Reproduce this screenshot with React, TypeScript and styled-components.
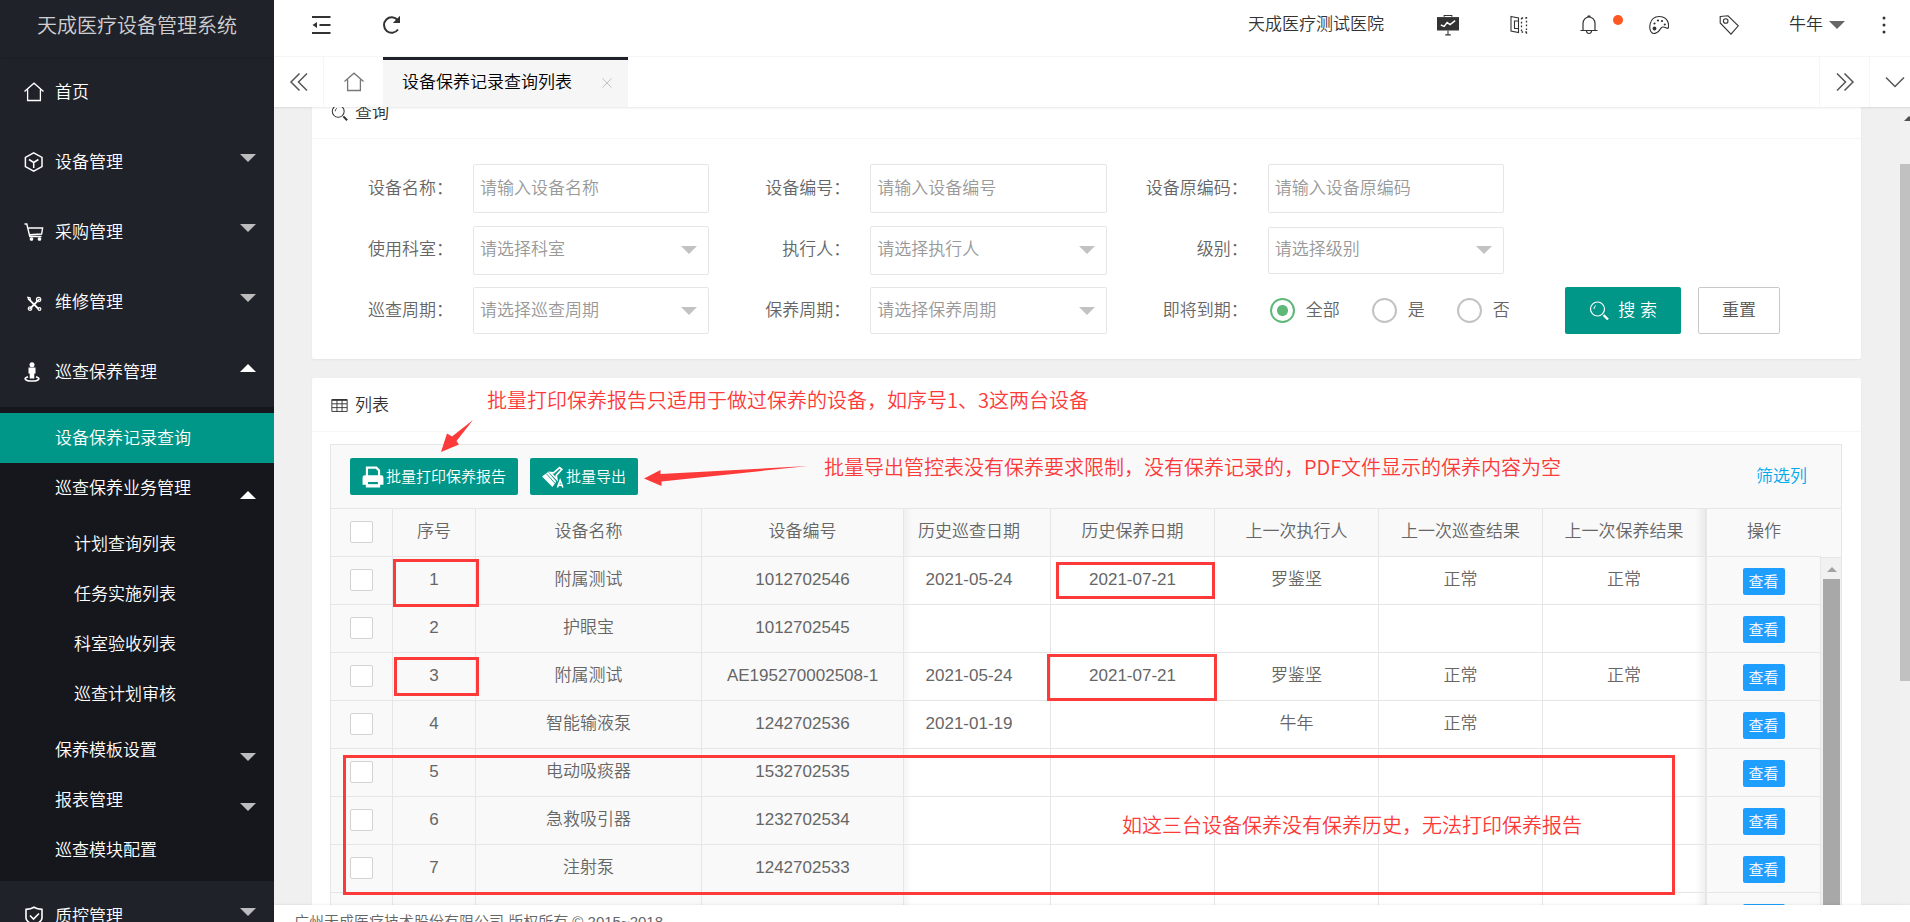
import React from 'react';
import styled, { createGlobalStyle, css } from 'styled-components';

const TEAL = '#009688';
const LINE = '#e6e6e6';
const MARK = '#fc3a39';

const GlobalStyle = createGlobalStyle`
  * { box-sizing: border-box; }
  body {
    margin: 0;
    background: #f0f0f0;
    color: #666;
    font: 350 17px/24px "Liberation Sans", "Noto Sans CJK SC", sans-serif;
  }
  ul { margin: 0; padding: 0; list-style: none; }
  h1, h2, p { margin: 0; font-weight: inherit; }
  a { color: inherit; text-decoration: none; }
  button, input, select { font: inherit; color: inherit; }
  button { padding: 0; border: 0; background: none; cursor: pointer; }
`;

/* ---------- icons ---------- */

const Svg = styled.svg<{ $size?: number }>`
  display: block;
  flex: none;
  width: ${p => p.$size ?? 20}px;
  height: ${p => p.$size ?? 20}px;
  fill: none;
  stroke: currentColor;
  stroke-width: 1.3;
`;

type IconName =
  | 'home' | 'cube' | 'cart' | 'tools' | 'person' | 'shield' | 'collapse' | 'refresh'
  | 'board' | 'note' | 'bell' | 'palette' | 'tag' | 'more' | 'left' | 'right' | 'down'
  | 'close' | 'search' | 'grid' | 'printer' | 'brush';

const shapes: Record<IconName, React.ReactNode> = {
  home: <path d="M.5 9.5 10 1.2l9.500 8.300M3.600 7.500v11h12.800v-11" />,
  cube: <path strokeWidth="1.500" d="M9.700.9 18 5.400v9.200l-8.300 4.500-8.300-4.500V5.400zM5 7.500l4.700 3 4.700-3M9.700 10.500v5.500" />,
  cart: <><path strokeWidth="1.400" d="M.5 2h2.300l3 12.500h11.700M4.600 6h14l-1 6-12 .8" /><circle cx="7.500" cy="17" r="1.200" fill="currentColor" /><circle cx="15.500" cy="17" r="1.200" fill="currentColor" /></>,
  tools: <g transform="translate(2 3.500) scale(.9)"><path strokeWidth="2" d="M2.500 3.500 14 15M15 4 4 15" /><circle cx="14" cy="4.500" r="2.400" /><circle cx="4.500" cy="14.500" r="2" /><circle cx="15" cy="15" r="1.500" /><path d="M2 2l2.500.5L5 5l-2-.5z" /></g>,
  person: <><circle cx="8" cy="2.800" r="2.500" fill="currentColor" stroke="none" /><path fill="currentColor" stroke="none" d="M4.500 5.500h7v6H10.300v5H5.700v-5H4.500z" /><path strokeWidth="1.700" d="M4 14.700c-5 1.600-3 4.300 4 4.300s9-2.700 4-4.300" /></>,
  shield: <path strokeWidth="1.600" d="M10 1.200c2.500 1.500 5 2 8 2.200v8.500c0 3-4 5.500-8 7-4-1.500-8-4-8-7V3.400c3-.2 5.500-.7 8-2.200zM6 9.500l3.500 3.500 5.500-5.500" />,
  collapse: <><path strokeWidth="2" d="M1 2h18.500M8.500 10h11M1 18h18.500" /><path fill="currentColor" stroke="none" d="M1.500 10 6 7v6z" /></>,
  refresh: <><path strokeWidth="2" d="M16.700 5.200A7.700 7.700 0 1 0 17 14.500" /><path fill="currentColor" stroke="none" d="M19 .8V8h-7.200z" /></>,
  board: <><path fill="currentColor" stroke="none" d="M0 2.800h20V15H0z" /><path strokeWidth="1" d="M6.500 2.500V1.300h7v1.200M10 15v4M7.500 19h5" /><path stroke="#fff" d="m3.500 10 3 1.300 2.700-3.500 2.700 1.800L16.500 6" /></>,
  note: <><path strokeWidth="1.100" d="M2 1.500 9.500 3v14.500L2 16zM5.500 6h4v7.500h-4z" /><path strokeWidth="1.300" strokeDasharray="1.600 2.200" d="M12.500 3v14M17.500 2v17M12.500 3h6M12.500 17h6" /></>,
  bell: <path strokeWidth="1.200" d="M1.500 15.500h17M4 15.500v-7a6 6.500 0 0 1 12 0v7M8.800 2a1.200 1.200 0 0 1 2.400 0M7.500 16c.3 3.300 4.700 3.300 5 0" />,
  palette: <><path strokeWidth="1.100" d="M4 18.500C-1.500 15 .2 1.500 10 1.500c8 0 10.500 6.500 9.300 11.500-1.800.8-3-1.500-5.800-1-3 .7-2.300 6.500-9.500 6.500z" /><g fill="currentColor" stroke="none"><circle cx="5.500" cy="13.500" r="1.900" /><circle cx="5.500" cy="8.500" r="1.100" /><circle cx="9" cy="5.500" r="1.100" /><circle cx="13" cy="6" r="1.100" /><circle cx="15.800" cy="9.500" r="1.100" /></g></>,
  tag: <><path strokeWidth="1.100" d="M1.200 1.500 9 .8l10.300 10L12 19.200 1.200 8z" /><circle cx="6.700" cy="6" r="2.300" strokeWidth="1.100" /></>,
  more: <g fill="currentColor" stroke="none"><circle cx="10" cy="3" r="1.500" /><circle cx="10" cy="10" r="1.500" /><circle cx="10" cy="17" r="1.500" /></g>,
  left: <path strokeWidth="1.500" d="M10.500 1.500 2 10l8.500 8.500M18 1.500 9.500 10l8.500 8.500" />,
  right: <path strokeWidth="1.500" d="M2 1.500l8.500 8.500L2 18.500M9.500 1.500 18 10l-8.500 8.500" />,
  down: <path strokeWidth="1.500" d="m1 5.500 9 9 9-9" />,
  close: <path strokeWidth="2" d="m1 1 18 18M19 1 1 19" />,
  search: <><circle cx="8.500" cy="8" r="7" strokeWidth="1.200" /><path strokeWidth="2.400" d="m14.500 14 4.500 4.500" /><path strokeWidth="1" d="M5 8a3.500 3.500 0 0 1 2-3.500" /></>,
  grid: <><path strokeWidth="1.100" d="M1 3h18v14H1zM1 8h18M1 12.500h18M7 3v14M13 3v14" /><path strokeWidth="2" d="M1 3.500h18" /></>,
  printer: <><path strokeWidth="2" d="M4.500 9V1.500h8.500L15.500 4v5" /><path fill="currentColor" stroke="none" d="M2.500 8.500h15a2 2 0 0 1 2 2V17h-3v2.500h-13V17h-3v-6.500a2 2 0 0 1 2-2z" /><path stroke={TEAL} strokeWidth="2" d="M5.500 15.500h9" /></>,
  brush: <><path fill="currentColor" stroke="none" d="m5.500 5.500 7.500 8.500-3.500 5L0 9.500z" /><path stroke={TEAL} strokeWidth=".8" d="m4 7 8 9" /><path strokeWidth="1.500" d="m7.500 6 3 .3L16 1.500l2 1.500-5 5.500.5 3.500z" /><path strokeWidth="1.500" d="m14 19.500 2.500-6.500 2.500 6.500M15 17.500h3" /></>,
};

const Icon = ({ name, size }: { name: IconName; size?: number }) => (
  <Svg viewBox="0 0 20 20" $size={size} aria-hidden="true">{shapes[name]}</Svg>
);

const Caret = styled.i<{ $up?: boolean; $color?: string }>`
  flex: none;
  width: 0;
  height: 0;
  border: 0 solid transparent;
  border-left-width: 8px;
  border-right-width: 8px;
  ${p => p.$up
    ? css`border-bottom: 8px solid ${p.$color ?? '#fff'};`
    : css`border-top: 8px solid ${p.$color ?? '#bcbcbe'};`}
`;

/* ---------- page frame ---------- */

const Page = styled.div`
  display: flex;
  height: 100vh;
  overflow: hidden;
`;

const Main = styled.div`
  flex: 1;
  min-width: 0;
  display: flex;
  flex-direction: column;
`;

/* ---------- sidebar ---------- */

const Sidebar = styled.nav`
  flex: none;
  width: 274px;
  overflow: hidden;
  background: #20222a;
  color: #fff;
`;

const Brand = styled.h1`
  height: 57px;
  font-size: 20px;
  line-height: 52px;
  text-align: center;
  color: rgba(255, 255, 255, .8);
  box-shadow: 0 1px 2px rgba(0, 0, 0, .15);
`;

const MenuLink = styled.a`
  display: flex;
  align-items: center;
  height: 70px;
  padding: 0 18px 0 24px;
  gap: 11px;

  ${Caret} { margin: 0 0 8px auto; }
`;

const MenuText = styled.span`
  padding-top: 2px;
`;

const SubMenu = styled.ul`
  padding: 6px 0;
  background: #16171c;
`;

const SubLink = styled.a<{ $active?: boolean }>`
  display: flex;
  align-items: center;
  justify-content: space-between;
  height: 50px;
  padding: 2px 18px 0 55px;
  background: ${p => (p.$active ? TEAL : 'transparent')};

  ${Caret} { margin-top: 11px; }
`;

const LeafList = styled.ul`
  padding: 6px 0;
`;

const LeafLink = styled.a`
  display: block;
  height: 50px;
  padding-left: 74px;
  line-height: 52px;
`;

/* ---------- header ---------- */

const Header = styled.header`
  flex: none;
  display: flex;
  justify-content: space-between;
  height: 57px;
  padding-left: 12px;
  background: #fff;
  border-bottom: 1px solid #f6f6f6;
  color: #333;
`;

const HeaderGroup = styled.div`
  display: flex;
  padding-bottom: 6px;
`;

const HeaderButton = styled.button<{ $narrow?: boolean }>`
  position: relative;
  display: flex;
  align-items: center;
  gap: 6px;
  padding: 0 ${p => (p.$narrow ? 16 : 25)}px;
`;

const HospitalButton = styled(HeaderButton)`
  padding-right: 28px;
`;

const UserButton = styled(HeaderButton)`
  padding-right: 13px;
`;

const Dot = styled.span`
  position: absolute;
  top: 15px;
  right: 1px;
  width: 10px;
  height: 10px;
  border-radius: 50%;
  background: #ff5722;
`;

const TabBar = styled.div`
  position: relative;
  z-index: 1;
  flex: none;
  display: flex;
  height: 50px;
  margin-right: -9px;
  background: #fff;
  box-shadow: 0 1px 2px rgba(0, 0, 0, .1);
  color: #555;
`;

const TabTool = styled.button<{ $side?: 'left' | 'right' }>`
  flex: none;
  display: flex;
  align-items: center;
  justify-content: center;
  width: 50px;
  border: 0 solid #f6f6f6;
  ${p => (p.$side === 'left' ? 'border-right-width: 1px;' : '')}
  ${p => (p.$side === 'right' ? 'border-left-width: 1px;' : '')}
`;

const HomeTab = styled(TabTool)`
  width: 59px;
  color: #777;
`;

const ActiveTab = styled.div`
  display: flex;
  align-items: center;
  width: 245px;
  padding: 0 16px 2px 19px;
  margin-right: auto;
  border-top: 3px solid #20222a;
  background: #f6f6f6;
  color: #000;
  white-space: nowrap;

  button { color: #c2c2c2; margin-left: auto; }
`;

/* ---------- body ---------- */

const Viewport = styled.div`
  flex: 1;
  min-height: 0;
  display: flex;
  overflow: hidden;
`;

const Content = styled.main`
  flex: 1;
  min-width: 0;
  display: flex;
  flex-direction: column;
  gap: 19px;
  margin-top: -22px;
  padding: 0 38px;
`;

const Card = styled.section`
  position: relative;
  flex: none;
  background: #fff;
  border-radius: 2px;
  box-shadow: 0 1px 2px rgba(0, 0, 0, .05);
`;

const CardTitle = styled.h2`
  display: flex;
  align-items: center;
  gap: 7px;
  height: 54px;
  padding: 2px 19px 0;
  border-bottom: 1px solid #f6f6f6;
  font-size: 17px;
  color: #333;

  svg { width: 17px; }
`;

const SearchForm = styled.form`
  display: grid;
  grid-template-columns: 265fr 265fr 265fr 238fr;
  grid-template-rows: 49px 50px 47px;
  row-gap: 12px;
  padding: 25px 0;
`;

const Field = styled.div<{ $row: number; $col: number }>`
  grid-row: ${p => p.$row};
  grid-column: ${p => p.$col};
  display: flex;
  align-items: center;
  min-width: 0;
`;

const FieldLabel = styled.label`
  flex: none;
  width: 161px;
  padding-right: 20px;
  text-align: right;
`;

const Control = styled.div`
  position: relative;
  flex: 1;
  min-width: 0;

  ${Caret} {
    position: absolute;
    top: 50%;
    right: 12px;
    margin-top: -4px;
    pointer-events: none;
  }
`;

const boxed = css<{ $short?: boolean }>`
  display: block;
  width: 100%;
  height: ${p => (p.$short ? 47 : 49)}px;
  padding: 0 6px;
  border: 1px solid ${LINE};
  border-radius: 2px;
  background: #fff;
  color: #999;
  appearance: none;
  outline: none;
`;

const TextInput = styled.input`
  ${boxed}
  &::placeholder { color: #999; opacity: 1; }
`;

const SelectBox = styled.select<{ $short?: boolean }>`
  ${boxed}
`;

const RadioGroup = styled.div`
  display: flex;
  gap: 32px;
  padding-left: 2px;
  white-space: nowrap;
`;

const RadioLabel = styled.label`
  display: flex;
  align-items: center;
  gap: 11px;
`;

const Radio = styled.input`
  appearance: none;
  flex: none;
  width: 25px;
  height: 25px;
  margin: 0;
  border: 2px solid #c2c2c2;
  border-radius: 50%;

  &:checked {
    border-color: #5fb878;
    background: radial-gradient(circle, #5fb878 5px, transparent 6px);
  }
`;

const FormActions = styled.div`
  grid-row: 3;
  grid-column: 4;
  display: flex;
  gap: 17px;
  padding-left: 61px;
`;

const SearchButton = styled.button`
  display: flex;
  align-items: center;
  justify-content: center;
  gap: 9px;
  width: 116px;
  height: 47px;
  border-radius: 2px;
  background: ${TEAL};
  color: #fff;
`;

const ResetButton = styled.button`
  width: 82px;
  height: 47px;
  border: 1px solid #c9c9c9;
  border-radius: 2px;
  background: #fff;
  color: #555;
`;

/* ---------- table ---------- */

const TableFrame = styled.div`
  margin: 12px 19px 0 18px;
  border: 1px solid ${LINE};
  background: #f9f9f9;
`;

const Toolbar = styled.div`
  display: flex;
  align-items: center;
  gap: 12px;
  height: 64px;
  padding: 0 34px 0 19px;
  border-bottom: 1px solid ${LINE};
`;

const BatchButton = styled.button`
  display: flex;
  align-items: center;
  gap: 2px;
  height: 37px;
  padding: 0 12px;
  border-radius: 2px;
  background: ${TEAL};
  color: #fff;
  font-size: 15px;
`;

const FilterLink = styled.a`
  margin-left: auto;
  color: #01aaed;
`;

const TableBody = styled.div`
  display: flex;
  background: #f9f9f9;
`;

const Grid = styled.table`
  flex: 1;
  min-width: 0;
  border-collapse: separate;
  border-spacing: 0;
  table-layout: fixed;
  text-align: center;
`;

const Cell = styled.td<{ $kind?: 'scroll' | 'first' | 'last' | 'op'; $head?: boolean }>`
  height: 48px;
  padding: 0 0 2px;
  border: 0 solid ${LINE};
  border-right-width: 1px;
  border-bottom-width: 1px;
  background: #f9f9f9;
  font-weight: inherit;
  white-space: nowrap;

  ${p => p.$kind && p.$kind !== 'op' && !p.$head && css`background: #fff;`}
  ${p => p.$kind === 'first' && css`
    padding-right: 16px;
    background-image: linear-gradient(to right, rgba(0, 0, 0, .04), transparent 8px);
  `}
  ${p => p.$kind === 'last' && css`
    border-right-width: 2px;
    background-image: linear-gradient(to left, rgba(0, 0, 0, .06), transparent 10px);
  `}
  ${p => p.$kind === 'op' && css`
    padding: 0;
    ${p.$head ? 'border-right-width: 0; padding-bottom: 2px;' : ''}
  `}
`;

const Check = styled.input`
  appearance: none;
  display: block;
  width: 23px;
  height: 22px;
  margin: 0 0 0 19px;
  border: 1px solid #d2d2d2;
  border-radius: 2px;
  background: #fff;
`;

const ViewButton = styled.button`
  display: block;
  width: 42px;
  height: 27px;
  margin: 2px auto 0;
  border-radius: 2px;
  background: #1e9fff;
  color: #fff;
  font-size: 15px;
  line-height: 27px;
`;

const InnerScroll = styled.div`
  flex: none;
  display: flex;
  flex-direction: column;
  width: 20px;

  &::before {
    content: '';
    height: 48px;
    border-bottom: 1px solid ${LINE};
  }
`;

const InnerTrack = styled.div`
  flex: 1;
  display: flex;
  flex-direction: column;
  align-items: center;
  padding: 9px 0 0 1px;
  background: #f1f1f1;

  ${Caret} {
    border-left-width: 5px;
    border-right-width: 5px;
    border-bottom-width: 5px;
  }

  &::after {
    content: '';
    flex: 1;
    width: 17px;
    margin-top: 7px;
    background: #a8a8a8;
  }
`;

const PageScroll = styled.div`
  flex: none;
  width: 11px;
  padding-left: 1px;
  overflow: hidden;
  background: #f1f1f1;

  ${Caret} {
    display: block;
    margin: 9px 0 43px 4px;
    border-left-width: 5px;
    border-right-width: 5px;
    border-bottom-width: 5px;
  }
`;

const PageThumb = styled.div`
  height: 517px;
  background: #c1c1c1;
`;

const Footer = styled.footer`
  position: relative;
  flex: none;
  height: 17px;
  padding-left: 20px;
  overflow: hidden;
  background: #fff;
  box-shadow: 0 -1px 2px rgba(0, 0, 0, .06);
  font-size: 15px;
  line-height: 34px;
`;

/* ---------- hand-drawn notes over the list card ---------- */

const MarkLayer = styled.div`
  position: absolute;
  inset: 0;
  pointer-events: none;
  color: ${MARK};
  font: 350 20px/28px "Noto Sans CJK SC", sans-serif;
  white-space: nowrap;
`;

const MarkBox = styled.div<{ $x: number; $y: number; $w: number; $h: number }>`
  position: absolute;
  left: ${p => p.$x}px;
  top: ${p => p.$y}px;
  width: ${p => p.$w}px;
  height: ${p => p.$h}px;
  border: 3px solid ${MARK};
`;

const MarkText = styled.p<{ $x: number; $y: number }>`
  position: absolute;
  left: ${p => p.$x}px;
  top: ${p => p.$y}px;
`;

const MarkArrows = styled.svg`
  position: absolute;
  left: 0;
  top: 0;
  width: 520px;
  height: 120px;
  fill: ${MARK};
`;

/* ---------- data ---------- */

const topMenu: { icon: IconName; text: string; leaf?: boolean }[] = [
  { icon: 'home', text: '首页', leaf: true },
  { icon: 'cube', text: '设备管理' },
  { icon: 'cart', text: '采购管理' },
  { icon: 'tools', text: '维修管理' },
];

const leaves = ['计划查询列表', '任务实施列表', '科室验收列表', '巡查计划审核'];

const fields: { id: string; label: string; hint: string; row: number; col: number; select?: boolean; short?: boolean }[] = [
  { id: 'name', label: '设备名称：', hint: '请输入设备名称', row: 1, col: 1 },
  { id: 'code', label: '设备编号：', hint: '请输入设备编号', row: 1, col: 2 },
  { id: 'origin', label: '设备原编码：', hint: '请输入设备原编码', row: 1, col: 3 },
  { id: 'dept', label: '使用科室：', hint: '请选择科室', row: 2, col: 1, select: true },
  { id: 'executor', label: '执行人：', hint: '请选择执行人', row: 2, col: 2, select: true },
  { id: 'level', label: '级别：', hint: '请选择级别', row: 2, col: 3, select: true, short: true },
  { id: 'patrol', label: '巡查周期：', hint: '请选择巡查周期', row: 3, col: 1, select: true, short: true },
  { id: 'upkeep', label: '保养周期：', hint: '请选择保养周期', row: 3, col: 2, select: true, short: true },
];

const widths = ['62px', '83px', undefined, '202px', '147px', '164px', '164px', '164px', '164px', '114px'];

const heads = ['序号', '设备名称', '设备编号', '历史巡查日期', '历史保养日期', '上一次执行人', '上一次巡查结果', '上一次保养结果'];

const rows = [
  ['1', '附属测试', '1012702546', '2021-05-24', '2021-07-21', '罗鉴坚', '正常', '正常'],
  ['2', '护眼宝', '1012702545', '', '', '', '', ''],
  ['3', '附属测试', 'AE195270002508-1', '2021-05-24', '2021-07-21', '罗鉴坚', '正常', '正常'],
  ['4', '智能输液泵', '1242702536', '2021-01-19', '', '牛年', '正常', ''],
  ['5', '电动吸痰器', '1532702535', '', '', '', '', ''],
  ['6', '急救吸引器', '1232702534', '', '', '', '', ''],
  ['7', '注射泵', '1242702533', '', '', '', '', ''],
  ['', '', '', '', '', '', '', ''],
];

const kindOf = (i: number) => (i < 3 ? undefined : i === 3 ? 'first' : i === 7 ? 'last' : 'scroll') as
  'first' | 'last' | 'scroll' | undefined;

/* ---------- parts ---------- */

const SideNav = () => (
  <Sidebar>
    <Brand>天成医疗设备管理系统</Brand>
    <ul>
      {topMenu.map(m => (
        <li key={m.text}>
          <MenuLink href="#"><Icon name={m.icon} /><MenuText>{m.text}</MenuText>{!m.leaf && <Caret />}</MenuLink>
        </li>
      ))}
      <li>
        <MenuLink href="#"><Icon name="person" /><MenuText>巡查保养管理</MenuText><Caret $up /></MenuLink>
        <SubMenu>
          <li><SubLink href="#" $active>设备保养记录查询</SubLink></li>
          <li>
            <SubLink href="#">巡查保养业务管理<Caret $up /></SubLink>
            <LeafList>
              {leaves.map(t => <li key={t}><LeafLink href="#">{t}</LeafLink></li>)}
            </LeafList>
          </li>
          <li><SubLink href="#">保养模板设置<Caret /></SubLink></li>
          <li><SubLink href="#">报表管理<Caret /></SubLink></li>
          <li><SubLink href="#">巡查模块配置</SubLink></li>
        </SubMenu>
      </li>
      <li><MenuLink href="#"><Icon name="shield" /><MenuText>质控管理</MenuText><Caret /></MenuLink></li>
    </ul>
  </Sidebar>
);

const TopBar = () => (
  <Header>
    <HeaderGroup>
      <HeaderButton aria-label="收起菜单"><Icon name="collapse" /></HeaderButton>
      <HeaderButton aria-label="刷新"><Icon name="refresh" /></HeaderButton>
    </HeaderGroup>
    <HeaderGroup>
      <HospitalButton>天成医疗测试医院</HospitalButton>
      <HeaderButton aria-label="看板"><Icon name="board" size={22} /></HeaderButton>
      <HeaderButton aria-label="便签"><Icon name="note" /></HeaderButton>
      <HeaderButton aria-label="消息"><Icon name="bell" /><Dot /></HeaderButton>
      <HeaderButton aria-label="主题"><Icon name="palette" /></HeaderButton>
      <HeaderButton aria-label="标签"><Icon name="tag" /></HeaderButton>
      <UserButton>牛年<Caret $color="#666" /></UserButton>
      <HeaderButton $narrow aria-label="更多"><Icon name="more" /></HeaderButton>
    </HeaderGroup>
  </Header>
);

const Tabs = () => (
  <TabBar>
    <TabTool $side="left" aria-label="向左"><Icon name="left" /></TabTool>
    <HomeTab aria-label="首页"><Icon name="home" /></HomeTab>
    <ActiveTab>设备保养记录查询列表<button aria-label="关闭"><Icon name="close" size={10} /></button></ActiveTab>
    <TabTool $side="right" aria-label="向右"><Icon name="right" /></TabTool>
    <TabTool $side="right" aria-label="标签操作"><Icon name="down" /></TabTool>
  </TabBar>
);

const QueryCard = () => (
  <Card>
    <CardTitle><Icon name="search" />查询</CardTitle>
    <SearchForm>
      {fields.map(f => (
        <Field key={f.id} $row={f.row} $col={f.col}>
          <FieldLabel htmlFor={f.id}>{f.label}</FieldLabel>
          <Control>
            {f.select ? (
              <>
                <SelectBox id={f.id} $short={f.short}><option>{f.hint}</option></SelectBox>
                <Caret $color="#c2c2c2" />
              </>
            ) : <TextInput id={f.id} placeholder={f.hint} />}
          </Control>
        </Field>
      ))}
      <Field $row={3} $col={3}>
        <FieldLabel as="span">即将到期：</FieldLabel>
        <RadioGroup role="radiogroup" aria-label="即将到期">
          {['全部', '是', '否'].map((t, i) => (
            <RadioLabel key={t}><Radio type="radio" name="due" defaultChecked={i === 0} />{t}</RadioLabel>
          ))}
        </RadioGroup>
      </Field>
      <FormActions>
        <SearchButton type="button"><Icon name="search" />搜 索</SearchButton>
        <ResetButton type="reset">重置</ResetButton>
      </FormActions>
    </SearchForm>
  </Card>
);

const ListCard = () => (
  <Card>
    <CardTitle><Icon name="grid" size={17} />列表</CardTitle>
    <TableFrame>
      <Toolbar>
        <BatchButton><Icon name="printer" size={22} />批量打印保养报告</BatchButton>
        <BatchButton><Icon name="brush" size={22} />批量导出</BatchButton>
        <FilterLink href="#">筛选列</FilterLink>
      </Toolbar>
      <TableBody>
        <Grid>
          <colgroup>{widths.map((w, i) => <col key={i} width={w} />)}</colgroup>
          <thead>
            <tr>
              <Cell as="th" $head><Check type="checkbox" aria-label="全选" /></Cell>
              {heads.map((h, i) => <Cell as="th" key={h} $head $kind={kindOf(i)}>{h}</Cell>)}
              <Cell as="th" $head $kind="op">操作</Cell>
            </tr>
          </thead>
          <tbody>
            {rows.map((r, n) => (
              <tr key={n}>
                <Cell><Check type="checkbox" aria-label={`选择第${n + 1}行`} /></Cell>
                {r.map((v, i) => <Cell key={i} $kind={kindOf(i)}>{v}</Cell>)}
                <Cell $kind="op"><ViewButton>查看</ViewButton></Cell>
              </tr>
            ))}
          </tbody>
        </Grid>
        <InnerScroll><InnerTrack><Caret $up $color="#a3a3a3" /></InnerTrack></InnerScroll>
      </TableBody>
    </TableFrame>
    <MarkLayer>
      <MarkArrows viewBox="0 0 520 120">
        <path d="M129 74 135 55.500 140 58.500 161 42 144.500 63 147 66.500z" />
        <path d="M332 100.500 348.500 92V96L496 88 349.500 103.500V108z" />
      </MarkArrows>
      <MarkText $x={175} $y={8}>批量打印保养报告只适用于做过保养的设备，如序号1、3这两台设备</MarkText>
      <MarkText $x={512} $y={75}>批量导出管控表没有保养要求限制，没有保养记录的，PDF文件显示的保养内容为空</MarkText>
      <MarkText $x={810} $y={433}>如这三台设备保养没有保养历史，无法打印保养报告</MarkText>
      <MarkBox $x={81} $y={181} $w={86} $h={48} />
      <MarkBox $x={82} $y={279} $w={85} $h={39} />
      <MarkBox $x={744} $y={184} $w={159} $h={37} />
      <MarkBox $x={735} $y={276} $w={170} $h={47} />
      <MarkBox $x={31} $y={377} $w={1332} $h={140} />
    </MarkLayer>
  </Card>
);

export default function App() {
  return (
    <>
      <GlobalStyle />
      <Page>
        <SideNav />
        <Main>
          <TopBar />
          <Tabs />
          <Viewport>
            <Content>
              <QueryCard />
              <ListCard />
            </Content>
            <PageScroll>
              <Caret $up $color="#505050" />
              <PageThumb />
            </PageScroll>
          </Viewport>
          <Footer>广州天成医疗技术股份有限公司 版权所有 © 2015~2018</Footer>
        </Main>
      </Page>
    </>
  );
}
